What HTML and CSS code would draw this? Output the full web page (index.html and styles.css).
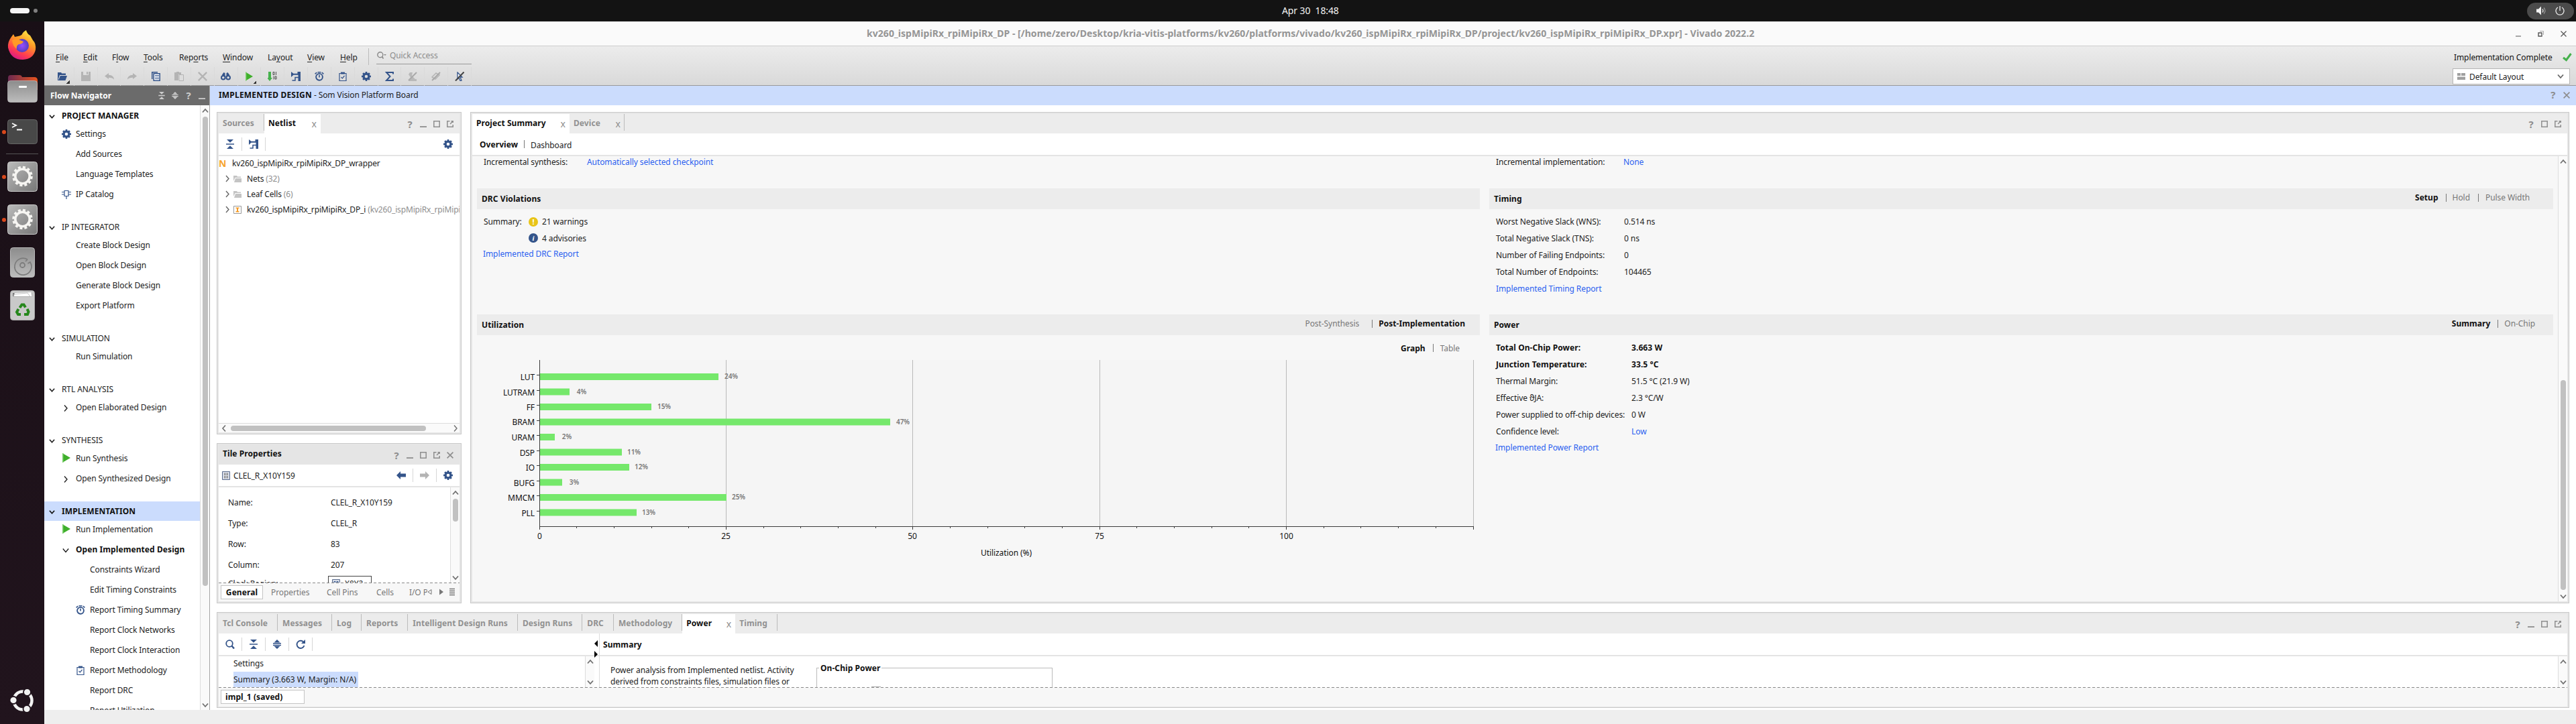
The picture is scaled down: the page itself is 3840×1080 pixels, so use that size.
FILE: index.html
```html
<!DOCTYPE html>
<html lang="en">
<head>
<meta charset="utf-8">
<title>Vivado 2022.2</title>
<link rel="stylesheet" href="styles.css">
</head>
<body>
<svg class="defs" aria-hidden="true">
  <symbol id="gear" viewBox="0 0 14 14"><path fill-rule="evenodd" fill="currentColor" d="M5.8 0h2.4l.3 1.8 1 .4L11 1.200l1.800 1.800-1 1.500.4 1 1.800.3v2.400l-1.800.3-.4 1 1 1.500-1.800 1.800-1.500-1-1 .4-.3 1.800H5.800l-.3-1.800-1-.4-1.500 1L1.200 11l1-1.500-.4-1L0 8.200V5.800l1.800-.3.4-1-1-1.500L3 1.200l1.500 1 1-.4zM7 4.700a2.300 2.300 0 1 0 0 4.600 2.300 2.300 0 0 0 0-4.600z"/></symbol>
  <symbol id="ip" viewBox="0 0 14 14"><path fill="none" stroke="currentColor" stroke-width="1.200" d="M4 1.500h6v8H4zM0 3.500h4M0 7h4M10 3.500h4M10 7h4M7 9.500V14"/></symbol>
  <symbol id="play" viewBox="0 0 12 14"><path fill="#3faf2b" d="M0 0l12 7-12 7z"/><path fill="#7fd070" d="M0 0h1.500v14H0z"/></symbol>
  <symbol id="clock" viewBox="0 0 14 14"><circle cx="7" cy="7.800" r="4.900" fill="none" stroke="currentColor" stroke-width="1.900"/><path stroke="currentColor" stroke-width="1.600" d="M7 4.800V8.600M4.500.8h5M.6 3.400l2.600-2.200M13.400 3.400l-2.600-2.200"/></symbol>
  <symbol id="clip" viewBox="0 0 12 14"><path fill="none" stroke="currentColor" stroke-width="1.200" d="M1 2.500h10v11H1zM3.500 8l1.800 1.800L8.500 6"/><path fill="currentColor" d="M3 .6h6v3H3z"/></symbol>
  <symbol id="collapse" viewBox="0 0 12 14"><path fill="currentColor" d="M1 0h10L6 4.800zM0 6.200h12v1.600H0zM1 14h10L6 9.200z"/></symbol>
  <symbol id="expand" viewBox="0 0 12 14"><path fill="currentColor" d="M6 0l4.500 4.500h-9zM0 5h12v1.500H0zM0 7.700h12v1.500H0zM6 14L1.500 9.700h9z"/></symbol>
  <symbol id="hier" viewBox="0 0 14 14"><path fill="currentColor" d="M0 0l3.500 2.800H9.500V0H14v14h-3.500V4.800H3.500L0 8z"/><path fill="none" stroke="currentColor" stroke-width="1.500" d="M11 8.500H6v4.500H1.500"/></symbol>
  <symbol id="down" viewBox="0 0 10 8"><path fill="none" stroke="currentColor" stroke-width="1.800" d="M1 1.500l4 4.500 4-4.500"/></symbol>
  <symbol id="down-thin" viewBox="0 0 10 8"><path fill="none" stroke="currentColor" stroke-width="1.200" d="M.8 1.500l4.200 5 4.200-5"/></symbol>
  <symbol id="up" viewBox="0 0 10 8"><path fill="none" stroke="currentColor" stroke-width="1.800" d="M1 6.500L5 2l4 4.500"/></symbol>
  <symbol id="right" viewBox="0 0 8 10"><path fill="none" stroke="currentColor" stroke-width="1.400" d="M2 .5L6 5 2 9.500"/></symbol>
  <symbol id="left" viewBox="0 0 8 10"><path fill="none" stroke="currentColor" stroke-width="1.600" d="M6 .5L2 5l4 4.500"/></symbol>
  <symbol id="min" viewBox="0 0 10 10"><path fill="currentColor" d="M0 8.200h10V10H0z"/></symbol>
  <symbol id="max" viewBox="0 0 10 10"><path fill="none" stroke="currentColor" stroke-width="1.500" d="M.8.8h8.400v8.400H.8z"/></symbol>
  <symbol id="float" viewBox="0 0 10 10"><path fill="none" stroke="currentColor" stroke-width="1.500" d="M4.500.8H.8v8.400h8.400V6M5 5l3.500-3.500M6.500 .8h2.700v2.200"/></symbol>
  <symbol id="close" viewBox="0 0 10 10"><path fill="none" stroke="currentColor" stroke-width="1.700" d="M.6.600l8.800 8.800M9.400.600L.6 9.400"/></symbol>
  <symbol id="folder" viewBox="0 0 12 10"><path fill="#c4c4c4" d="M0 0h5l1 1.500h5V3H2.500L0 8z"/><path fill="#c4c4c4" d="M3 4h9v6H1z"/></symbol>
  <symbol id="arrow" viewBox="0 0 14 12"><path fill="currentColor" d="M0 6l6-6v3.500h8v5H6V12z"/></symbol>
  <symbol id="undo" viewBox="0 0 14 10"><path fill="currentColor" d="M0 4.500L6 0v2.700c5 .3 8 2.500 8 7-1.800-2.200-4-3-8-3V9z"/></symbol>
</svg>

<header class="topbar">
  <span class="ws"></span><span class="ws-dot"></span>
  <span class="clock-text">Apr 30&nbsp; 18:48</span>
  <span class="tray">
    <svg width="15" height="14" viewBox="0 0 15 14"><path fill="#f4f4f4" d="M0 4.500h3L7 .5v13l-4-4H0z"/><path fill="none" stroke="#f4f4f4" stroke-width="1.200" d="M9 4.500q2 2.500 0 5"/><path fill="none" stroke="#999" stroke-width="1.200" d="M11 2.500q4 4.500 0 9"/></svg>
    <svg width="14" height="14" viewBox="0 0 14 14"><path fill="none" stroke="#eee" stroke-width="1.300" d="M4 2a6 6 0 1 0 6 0M7 0v7"/></svg>
  </span>
</header>

<div class="screen">
  <aside class="dock">
    <div class="app firefox"><svg width="44" height="46" viewBox="0 0 44 46"><defs><linearGradient id="ff" x1=".8" y1="0" x2=".3" y2="1"><stop offset="0" stop-color="#fff04a"/><stop offset=".4" stop-color="#ff9a26"/><stop offset=".75" stop-color="#ff3d50"/><stop offset="1" stop-color="#d8178a"/></linearGradient><radialGradient id="fp"><stop offset="0" stop-color="#9a4dff"/><stop offset="1" stop-color="#5340c0"/></radialGradient></defs><path fill="url(#ff)" d="M6 11l3-4 2 4 5-1q5-1 6-3Q23 4 28 1q1 5 6 8l4 7q5 5 4 14-3 14-19 15Q5 45 1 27q-1-8 5-16z"/><circle cx="22" cy="24" r="10" fill="url(#fp)"/><path fill="#ff9a26" d="M7 16q6-4 12 0l5 2q-2 4-7 4-4 2-3 7-6-4-7-13z"/></svg></div>
    <div class="app files"><svg width="45" height="41" viewBox="0 0 45 41"><defs><linearGradient id="fo"><stop offset="0" stop-color="#6b2950"/><stop offset="1" stop-color="#e8541f"/></linearGradient><linearGradient id="gr" x2="0" y2="1"><stop offset="0" stop-color="#8c8c8c"/><stop offset="1" stop-color="#bdbdbd"/></linearGradient><linearGradient id="gd" x2="1" y2="1"><stop offset="0" stop-color="#bbb"/><stop offset="1" stop-color="#777"/></linearGradient></defs><path fill="url(#fo)" d="M1 4q0-4 4-4h13q3 0 4 3h18q5 0 5 5v14H1z"/><rect x=".5" y="8.500" width="44" height="32" rx="4" fill="url(#gr)" stroke="#ccc" stroke-opacity=".6"/><rect x="17" y="16" width="12" height="3" rx="1" fill="#fff"/></svg></div>
    <div class="app term run"><svg width="45" height="37" viewBox="0 0 45 37"><rect x=".5" y=".5" width="44" height="36" rx="4" fill="#484848" stroke="#666"/><path fill="none" stroke="#fff" stroke-width="1.800" d="M7 6l6 3-6 3M14 15.500h8"/></svg></div>
    <hr class="dock-sep">
    <div class="app gear1 run"><svg width="45" height="45" viewBox="0 0 45 45"><rect x=".5" y=".5" width="44" height="44" rx="4" fill="url(#gd)" stroke="#ccc"/><circle cx="22.500" cy="22" r="13.500" fill="none" stroke="#f6f5f2" stroke-width="3.500" stroke-dasharray="4 3.068"/><circle cx="22.500" cy="22" r="10.700" fill="none" stroke="#f6f5f2" stroke-width="3.600"/></svg></div>
    <div class="app gear2 run"><svg width="45" height="45" viewBox="0 0 45 45"><rect x=".5" y=".5" width="44" height="44" rx="4" fill="url(#gd)" stroke="#ccc"/><circle cx="22.500" cy="22" r="13.500" fill="none" stroke="#f6f5f2" stroke-width="3.500" stroke-dasharray="4 3.068"/><circle cx="22.500" cy="22" r="10.700" fill="none" stroke="#f6f5f2" stroke-width="3.600"/></svg></div>
    <div class="app disk"><svg width="37" height="45" viewBox="0 0 37 45"><rect x=".5" y=".5" width="36" height="44" rx="4" fill="url(#gr)" stroke="#bbb"/><path fill="none" stroke="#7c7c7c" stroke-width="1.700" d="M26 18A12.500 12.500 0 1 0 30 22l-3.500 2M26 18l-3 3"/><circle cx="18.500" cy="26.500" r="3.500" fill="none" stroke="#7c7c7c" stroke-width="1.800"/></svg></div>
    <div class="app trash"><svg width="37" height="45" viewBox="0 0 37 45"><rect x=".5" y=".5" width="36" height="44" rx="4" fill="#c9c9c9" stroke="#aaa"/><path fill="#777" d="M4 4h29v5H4z"/><path fill="#fff" stroke="#aaa" stroke-width=".7" d="M7 3.500l25-1 1 7H5zM6 6l20-2 4 5.500H5.500z"/><g fill="none" stroke="#26871c" stroke-width="4"><path d="M14.500 26l3-4.500h3l2.500 4M25.500 28l2 4-1.500 4h-5M16 36h-4l-2-3.500 2.500-4.500"/></g></svg></div>
    <div class="ubuntu"><svg width="36" height="36" viewBox="0 0 36 36"><circle cx="19" cy="18" r="13.500" fill="none" stroke="#f2f2f2" stroke-width="4.500"/><g fill="#f2f2f2" stroke="#21141d" stroke-width="1.800"><circle cx="5" cy="17.500" r="5.500"/><circle cx="25.500" cy="5.500" r="5.500"/><circle cx="25" cy="30.500" r="5.500"/></g></svg></div>
  </aside>

  <div class="window">
    <div class="titlebar"><span class="title">kv260_ispMipiRx_rpiMipiRx_DP - [/home/zero/Desktop/kria-vitis-platforms/kv260/platforms/vivado/kv260_ispMipiRx_rpiMipiRx_DP/project/kv260_ispMipiRx_rpiMipiRx_DP.xpr] - Vivado 2022.2</span>
      <span class="wm"><svg width="8" height="9"><path d="M0 8h8" stroke="#555"/></svg><svg width="9" height="9"><path fill="none" stroke="#555" stroke-width="1.400" d="M1 3h5v5H1z"/><path fill="none" stroke="#aaa" d="M3 .5h5.500V6"/></svg><svg width="9" height="9"><path stroke="#555" stroke-width="1.200" d="M.5.5l8 8M8.500.5l-8 8"/></svg></span></div>
    <div class="menus">
      <div class="menu-left">
        <nav class="menubar"><span><u>F</u>ile</span><span><u>E</u>dit</span><span>F<u>l</u>ow</span><span><u>T</u>ools</span><span>Rep<u>o</u>rts</span><span><u>W</u>indow</span><span>La<u>y</u>out</span><span><u>V</u>iew</span><span><u>H</u>elp</span>
          <div class="quick"><svg width="14" height="12" viewBox="0 0 14 12"><circle cx="4.800" cy="4.800" r="4" fill="none" stroke="#888" stroke-width="1.400"/><path stroke="#888" stroke-width="1.600" d="M7.500 7.500L9.500 10.500"/><path fill="#888" d="M10 4h4l-2 2z"/></svg>Quick Access</div></nav>
        <div class="toolbar">
          <i><svg width="14" height="12" viewBox="0 0 14 12"><path fill="#34548a" d="M0 0h5l1.200 1.500H12V4H3L1 9.500V12H0z"/><path fill="#34548a" d="M3.800 5H14l-2.500 7H1z"/></svg><b class="drop"></b></i>
          <i><svg width="14" height="14" viewBox="0 0 14 14"><path fill="#b4b4b4" d="M0 0h3v5h8V0h3v14H0zM8 0h2v4H8z"/></svg></i>
          <i class="dim"><svg width="14" height="10"><use href="#undo"/></svg></i>
          <i class="dim flip"><svg width="14" height="10"><use href="#undo"/></svg></i>
          <i><svg width="13" height="14" viewBox="0 0 13 14"><path fill="#34548a" d="M0 0h9v1.500H1.500V11H0z"/><path fill="#fff" stroke="#34548a" stroke-width="1.500" d="M3.200 2.700h9v10.500h-9z"/><path stroke="#34548a" d="M5 5.500h6M5 8h6M5 10.500h6"/></svg></i>
          <i><svg width="14" height="14" viewBox="0 0 14 14"><path fill="#b4b4b4" d="M0 1h3V0h4v1h3v3H6v9H0z"/><path fill="#ddd" stroke="#b4b4b4" d="M7 4.500h6.500v9H7z"/></svg></i>
          <i class="dim"><svg width="14" height="14"><use href="#close"/></svg></i>
          <i><svg width="15" height="12" viewBox="0 0 15 12"><g fill="none" stroke="#34548a" stroke-width="2"><circle cx="3.800" cy="7.800" r="2.800"/><circle cx="11.200" cy="7.800" r="2.800"/></g><path fill="#34548a" d="M2 3.500L4.500 0l2 1v4h2V1l2-1L13 3.500l-1 2H3z"/></svg></i>
          <i><svg width="11" height="14"><use href="#play"/></svg><b class="drop"></b></i>
          <i><svg width="14" height="14" viewBox="0 0 14 14"><path fill="#45b14c" d="M1 0h4v9h2l-4 5-4-5h2z"/><path fill="none" stroke="#555" stroke-width="1" d="M8 .5h2v4H8zM12.500 0v5M9 6.500v5M11 7h2v4h-2z"/></svg></i>
          <i><svg width="14" height="14"><use href="#hier"/></svg></i>
          <i><svg width="14" height="14"><use href="#clock"/></svg></i>
          <i><svg width="12" height="14"><use href="#clip"/></svg></i>
          <i><svg width="14" height="14"><use href="#gear"/></svg></i>
          <i><svg width="13" height="14" viewBox="0 0 13 14"><path fill="none" stroke="#34548a" stroke-width="2" d="M12 3.500V1H2l5.500 6L2 13h10v-2.500"/></svg></i>
          <i><svg width="14" height="14" viewBox="0 0 14 14"><path fill="#b9b9b9" d="M3 1h4l-1 5 5 5h2v3H1l4-4-4-6z"/><path stroke="#a9a9a9" stroke-width="2" d="M1 13L13 1"/></svg></i>
          <i><svg width="14" height="14" viewBox="0 0 14 14"><path fill="none" stroke="#b4b4b4" stroke-width="1.500" d="M1 8l6-6 5 3-6 6zM3 12l8-9"/><path stroke="#a9a9a9" stroke-width="1.800" d="M1 13L13 1"/></svg></i>
          <i><svg width="14" height="14" viewBox="0 0 14 14"><path fill="#fff" stroke="#34548a" stroke-width="1.300" d="M4 1l7 7H8l2 5-2 .5L6.500 9 4 11z"/><path stroke="#444" stroke-width="2" d="M1 13.500L13.500.5"/></svg></i>
        </div>
      </div>
      <div class="menu-right">
        <div class="status">Implementation Complete<svg width="14" height="13" viewBox="0 0 14 13"><path fill="none" stroke="#45b14c" stroke-width="3" d="M1 7l4.500 3.500L12.500 1"/></svg></div>
        <div class="layout-box"><svg width="12" height="10" viewBox="0 0 12 10"><path fill="#a0a0a0" d="M0 0h5v4H0zM6 0h6v4H6zM0 5.500h12V10H0z"/></svg><span>Default Layout</span><svg width="10" height="8"><use href="#down"/></svg></div>
      </div>
    </div>

    <div class="work">
      <section class="flow">
        <div class="flow-head"><span>Flow Navigator</span><svg width="10" height="11"><use href="#collapse"/></svg><svg width="10" height="11"><use href="#expand"/></svg><b>?</b><svg width="10" height="10"><use href="#min"/></svg></div>
        <div class="flow-body">
          <div class="tree">
            <h3 class="bold"><svg><use href="#down"/></svg>PROJECT MANAGER</h3>
            <p><svg class="navy"><use href="#gear"/></svg>Settings</p><p>Add Sources</p><p>Language Templates</p><p><svg class="navy"><use href="#ip"/></svg>IP Catalog</p>
            <h3><svg><use href="#down"/></svg>IP INTEGRATOR</h3>
            <p>Create Block Design</p><p>Open Block Design</p><p>Generate Block Design</p><p>Export Platform</p>
            <h3><svg><use href="#down"/></svg>SIMULATION</h3>
            <p>Run Simulation</p>
            <h3><svg><use href="#down"/></svg>RTL ANALYSIS</h3>
            <p><svg class="chev"><use href="#right"/></svg>Open Elaborated Design</p>
            <h3><svg><use href="#down"/></svg>SYNTHESIS</h3>
            <p><svg class="play"><use href="#play"/></svg>Run Synthesis</p><p><svg class="chev"><use href="#right"/></svg>Open Synthesized Design</p>
            <h3 class="bold sel"><svg><use href="#down"/></svg>IMPLEMENTATION</h3>
            <p><svg class="play"><use href="#play"/></svg>Run Implementation</p><p class="bold"><svg class="chev thin"><use href="#down-thin"/></svg>Open Implemented Design</p>
            <p class="sub">Constraints Wizard</p><p class="sub">Edit Timing Constraints</p><p class="sub"><svg class="navy"><use href="#clock"/></svg>Report Timing Summary</p><p class="sub">Report Clock Networks</p><p class="sub">Report Clock Interaction</p><p class="sub"><svg class="navy"><use href="#clip"/></svg>Report Methodology</p><p class="sub">Report DRC</p><p class="sub">Report Utilization</p>
          </div>
          <div class="vbar"><svg class="ar"><use href="#up"/></svg><span class="thumb flow-thumb"></span><svg class="ar end"><use href="#down"/></svg></div>
        </div>
      </section>

      <main class="design">
        <div class="design-head"><b>IMPLEMENTED DESIGN</b>&nbsp;- Som Vision Platform Board<span class="btns"><b>?</b><svg><use href="#close"/></svg></span></div>
        <div class="panes">
          <div class="row-top">
            <div class="col-left">
              <section class="panel netlist">
                <div class="tabs"><span class="tab first">Sources</span><span class="tab on nl">Netlist<em>x</em></span><span class="btns"><b>?</b><svg><use href="#min"/></svg><svg><use href="#max"/></svg><svg><use href="#float"/></svg></span></div>
                <div class="tools"><i><svg width="12" height="14"><use href="#collapse"/></svg></i><i><svg width="14" height="14"><use href="#hier"/></svg></i><svg class="cfg" width="14" height="14"><use href="#gear"/></svg></div>
                <div class="net-tree">
                  <p class="root"><b>N</b>kv260_ispMipiRx_rpiMipiRx_DP_wrapper</p>
                  <p><svg class="chev"><use href="#right"/></svg><svg class="fold"><use href="#folder"/></svg>Nets&nbsp;<s>(32)</s></p>
                  <p><svg class="chev"><use href="#right"/></svg><svg class="fold"><use href="#folder"/></svg>Leaf Cells&nbsp;<s>(6)</s></p>
                  <p><svg class="chev"><use href="#right"/></svg><svg class="inst" viewBox="0 0 12 12"><path fill="#fff" stroke="#999" d="M.5.5h11v11H.5z"/><path fill="#f59a23" d="M3.500 2.500h5v1.500H7v4h1.500v1.500h-5V8H5V4H3.500z"/></svg>kv260_ispMipiRx_rpiMipiRx_DP_i&nbsp;<s>(kv260_ispMipiRx_rpiMipiRx_DP)</s></p>
                </div>
                <div class="hbar"><svg class="ar"><use href="#left"/></svg><span></span><svg class="ar"><use href="#right"/></svg></div>
              </section>
              <section class="panel tile">
                <div class="tabs grey"><span class="cap">Tile Properties</span><span class="btns"><b>?</b><svg><use href="#min"/></svg><svg><use href="#max"/></svg><svg><use href="#float"/></svg><svg><use href="#close"/></svg></span></div>
                <div class="tools tile-tools"><svg width="12" height="13" viewBox="0 0 12 13"><path fill="#d8dde8" stroke="#5a6b8c" d="M.5.500h11v12H.5z"/><path fill="#999" d="M3 2.500h2.500V6H3zM6.500 2.500H9V6H6.500zM3 7h2.500v3.500H3zM6.500 7H9v3.500H6.500z"/></svg><span>CLEL_R_X10Y159</span><svg class="nv" width="14" height="12"><use href="#arrow"/></svg><i class="bar"></i><svg class="fw" width="14" height="12"><use href="#arrow"/></svg><i class="bar"></i><svg class="nv" width="14" height="14"><use href="#gear"/></svg></div>
                <div class="tile-body">
                  <dl><dt>Name:</dt><dd>CLEL_R_X10Y159</dd><dt>Type:</dt><dd>CLEL_R</dd><dt>Row:</dt><dd>83</dd><dt>Column:</dt><dd>207</dd><dt>Clock Region:</dt><dd><span class="region"><svg width="12" height="12" viewBox="0 0 12 12"><path fill="#d8dde8" stroke="#5a6b8c" d="M.5.500h11v11H.5z"/><path fill="none" stroke="#34548a" d="M3 3.500h2v4H3zM7 3.500h2v4H7z"/></svg>X0Y2</span></dd></dl>
                  <div class="vbar"><svg class="ar"><use href="#up"/></svg><span class="thumb tile-thumb"></span><svg class="ar end"><use href="#down"/></svg></div>
                </div>
                <div class="subtabs"><b>General</b><span>Properties</span><span>Cell Pins</span><span>Cells</span><span class="cut">I/O Ports</span><svg width="48" height="12" viewBox="0 0 48 12"><path fill="none" stroke="#777" d="M6 2.500v7L1 6z"/><path fill="#777" d="M18 1.500v9L24 6z"/><path stroke="#777" stroke-width="1.300" d="M33 1.500h8M33 4.500h8M33 7.500h8M33 10.500h8"/></svg></div>
              </section>
            </div>

            <section class="panel project">
              <div class="tabs"><span class="tab on ps">Project Summary<em>x</em></span><span class="tab dev">Device<em>x</em></span><span class="btns"><b>?</b><svg><use href="#max"/></svg><svg><use href="#float"/></svg></span></div>
              <div class="tools views"><b>Overview</b><span>Dashboard</span></div>
              <div class="proj-body">
                <div class="half left-half">
                  <div class="incr"><span>Incremental synthesis:</span><a>Automatically selected checkpoint</a></div>
                  <article class="card drc"><h4>DRC Violations</h4>
                    <div class="ln"><span class="k">Summary:</span><span class="dot warn">!</span>21 warnings</div>
                    <div class="ln l2"><span class="k"></span><span class="dot info">i</span>4 advisories</div>
                    <a class="ln l3">Implemented DRC Report</a></article>
                  <article class="card util"><h4>Utilization<span class="sw"><span>Post-Synthesis</span><b>Post-Implementation</b></span></h4>
                    <div class="gt"><b>Graph</b><span>Table</span></div>
                    <svg class="chart" width="1495" height="310" viewBox="711 530 1495 310">
                      <path fill="#f5f5f5" d="M805 537h1392v248H805z"/>
                      <path stroke="#b9b9b9" d="M1082.500 537v248M1360.500 537v248M1639.500 537v248M1917.500 537v248M2196.500 537v248"/>
                      <g fill="#75e86b"><path d="M805 557h266v10H805zM805 579.500h44v10h-44zM805 602h166v10H805zM805 624.500h522v10H805zM805 647h22v10h-22zM805 669.500h122v10H805zM805 692h133v10H805zM805 714.500h33v10h-33zM805 737h278v10H805zM805 759.500h144v10H805z"/></g>
                      <path stroke="#3a3a3a" fill="none" d="M804.500 537v253M804 785.500h1393M800 559.500h4M800 582.500h4M800 604.500h4M800 627.500h4M800 649.500h4M800 672.500h4M800 694.500h4M800 717.500h4M800 739.500h4M800 762.500h4M859.500 785v3M915.500 785v3M971.500 785v3M1026.500 785v3M1082.500 785v5M1138.500 785v3M1193.500 785v3M1249.500 785v3M1305.500 785v3M1360.500 785v5M1416.500 785v3M1472.500 785v3M1527.500 785v3M1583.500 785v3M1639.500 785v5M1694.500 785v3M1750.500 785v3M1806.500 785v3M1861.500 785v3M1917.500 785v5M1973.500 785v3M2028.500 785v3M2084.500 785v3M2140.500 785v3M2196.500 785v5"/>
                      <g class="cat"><text x="797" y="567">LUT</text><text x="797" y="590">LUTRAM</text><text x="797" y="612">FF</text><text x="797" y="634">BRAM</text><text x="797" y="657">URAM</text><text x="797" y="680">DSP</text><text x="797" y="702">IO</text><text x="797" y="725">BUFG</text><text x="797" y="747">MMCM</text><text x="797" y="770">PLL</text></g>
                      <g class="val"><text x="1090" y="565">24%</text><text x="867" y="588">4%</text><text x="990" y="610">15%</text><text x="1346" y="633">47%</text><text x="845" y="655">2%</text><text x="945" y="678">11%</text><text x="956" y="700">12%</text><text x="856" y="723">3%</text><text x="1101" y="745">25%</text><text x="967" y="768">13%</text></g>
                      <g class="num"><text x="804.500" y="804">0</text><text x="1082" y="804">25</text><text x="1360" y="804">50</text><text x="1639" y="804">75</text><text x="1917.500" y="804">100</text><text x="1500" y="829">Utilization (%)</text></g>
                    </svg></article>
                </div>
                <div class="half right-half">
                  <div class="incr r"><span>Incremental implementation:</span><a>None</a></div>
                  <article class="card tim"><h4>Timing<span class="sw t"><b>Setup</b><span>Hold</span><span>Pulse Width</span></span></h4>
                    <dl><dt>Worst Negative Slack (WNS):</dt><dd>0.514 ns</dd><dt>Total Negative Slack (TNS):</dt><dd>0 ns</dd><dt>Number of Failing Endpoints:</dt><dd>0</dd><dt>Total Number of Endpoints:</dt><dd>104465</dd></dl><a>Implemented Timing Report</a></article>
                  <article class="card pow"><h4>Power<span class="sw p"><b>Summary</b><span>On-Chip</span></span></h4>
                    <dl><dt><b>Total On-Chip Power:</b></dt><dd><b>3.663 W</b></dd><dt><b>Junction Temperature:</b></dt><dd><b>33.5 °C</b></dd><dt>Thermal Margin:</dt><dd>51.5 °C (21.9 W)</dd><dt>Effective ϑJA:</dt><dd>2.3 °C/W</dd><dt>Power supplied to off-chip devices:</dt><dd>0 W</dd><dt>Confidence level:</dt><dd><a>Low</a></dd></dl><a class="rep">Implemented Power Report</a></article>
                </div>
                <div class="vbar"><svg class="ar"><use href="#up"/></svg><span class="thumb proj-thumb"></span><svg class="ar end"><use href="#down"/></svg></div>
              </div>
            </section>
          </div>

          <section class="panel bottom">
            <div class="tabs"><span class="tab first">Tcl Console</span><span class="tab">Messages</span><span class="tab">Log</span><span class="tab">Reports</span><span class="tab">Intelligent Design Runs</span><span class="tab">Design Runs</span><span class="tab">DRC</span><span class="tab">Methodology</span><span class="tab on pw">Power<em>x</em></span><span class="tab tm">Timing</span><span class="btns"><b>?</b><svg><use href="#min"/></svg><svg><use href="#max"/></svg><svg><use href="#float"/></svg></span></div>
            <div class="split">
              <div class="split-l">
                <div class="tools"><i><svg width="14" height="14" viewBox="0 0 14 14"><circle cx="6" cy="6" r="4.800" fill="none" stroke="#34548a" stroke-width="1.800"/><path stroke="#34548a" stroke-width="2.400" d="M9.500 9.500l3.500 4"/></svg></i><i><svg width="12" height="14"><use href="#collapse"/></svg></i><i><svg width="12" height="14"><use href="#expand"/></svg></i><i><svg width="14" height="14" viewBox="0 0 14 14"><path fill="none" stroke="#34548a" stroke-width="1.900" d="M12 4.500A5.600 5.600 0 1 0 12.500 9"/><path fill="#34548a" d="M14 0v6H8z"/></svg></i></div>
                <div class="pl"><div class="list"><p>Settings</p><p><mark>Summary (3.663 W, Margin: N/A)</mark></p></div><div class="vbar"><svg class="ar"><use href="#up"/></svg><svg class="ar end"><use href="#down"/></svg></div></div>
              </div>
              <div class="grip"><svg width="6" height="27" viewBox="0 0 6 27"><path d="M5 0v10L0 5zM0 16v10l5-5z"/></svg></div>
              <div class="split-r">
                <div class="tools sum"><b>Summary</b></div>
                <div class="pr"><p>Power analysis from Implemented netlist. Activity<br>derived from constraints files, simulation files or</p><fieldset><legend>On-Chip Power</legend><span class="nub"></span></fieldset><div class="vbar"><svg class="ar"><use href="#up"/></svg><svg class="ar end"><use href="#down"/></svg></div></div>
              </div>
            </div>
            <div class="runs"><b>impl_1 (saved)</b></div>
          </section>
        </div>
      </main>
    </div>
    <footer class="foot"></footer>
  </div>
</div>
</body>
</html>
```
FILE: styles.css
```css
* { box-sizing: border-box; }
html, body { margin: 0; width: 3840px; height: 1080px; overflow: hidden; }
body { font: 12px/17px "Noto Sans", "Open Sans", sans-serif; color: #222; letter-spacing: -0.09px; background: #fff; display: flex; flex-direction: column; white-space: nowrap; }
b, .bold, h4, legend { font-weight: 700; letter-spacing: 0.08px; color: #111; }
p, h3, h4, dl, dd, dt { margin: 0; }
svg { flex: none; display: block; }
i { font-style: normal; }
a { color: #2b5ff0; }
.defs { position: absolute; width: 0; height: 0; }
.navy, .tools, .nv { color: #34548a; }

.topbar { height: 32px; flex: none; background: #131313; display: flex; align-items: center; padding-left: 15px; color: #f2f2f2; }
.ws { width: 29px; height: 8px; border-radius: 4px; background: #f4f4f4; }
.ws-dot { width: 6px; height: 6px; border-radius: 3px; background: #808080; margin-left: 6px; }
.clock-text { margin-left: 1855px; width: 90px; font-size: 14px; letter-spacing: -0.1px; margin-top: -2px; }
.tray { margin-left: auto; margin-right: 3px; width: 70px; height: 25px; border-radius: 13px; background: #4b4b4b; display: flex; align-items: center; padding-left: 14px; gap: 13px; }

.screen { flex: 1; display: flex; min-height: 0; }
.dock { width: 66px; flex: none; background: linear-gradient(#190f16, #21141d); display: flex; flex-direction: column; align-items: center; padding-top: 12px; }
.app { width: 66px; display: flex; justify-content: center; align-items: center; position: relative; }
.run::before { content: ""; position: absolute; left: 3px; top: calc(50% - 3px); width: 6px; height: 6px; border-radius: 3px; background: #d9481c; }
.firefox { height: 46px; }
.files { height: 41px; margin-top: 22px; }
.term { height: 37px; margin-top: 25px; }
.dock-sep { width: 48px; height: 1px; border: 0; background: #555; margin: 14px 0 11px; }
.gear1 { height: 45px; }
.gear2, .disk, .trash { height: 45px; margin-top: 19px; }
.ubuntu { margin-top: auto; margin-bottom: 17px; }

.window { flex: 1; min-width: 0; display: flex; flex-direction: column; }
.titlebar { height: 36px; flex: none; background: #fafafa; display: flex; align-items: center; padding: 0 14px 0 1226px; }
.title { font: 700 14px/20px "Noto Sans", sans-serif; color: #959595; letter-spacing: 0.055px; margin-top: -1px; }
.wm { margin-left: auto; display: flex; gap: 25px; align-items: center; }
.menus { height: 60px; flex: none; border-top: 1px solid #ccc; border-bottom: 1px solid #999; background: linear-gradient(#ececec, #d9d9d9); display: flex; justify-content: space-between; }
.menubar { height: 31px; display: flex; align-items: center; padding-left: 17px; }
.menubar > span { height: 17px; margin-top: 2px; }
.menubar > span:nth-child(1) { width: 41px; }
.menubar > span:nth-child(2) { width: 43px; }
.menubar > span:nth-child(3) { width: 47px; }
.menubar > span:nth-child(4) { width: 53px; }
.menubar > span:nth-child(5) { width: 65px; }
.menubar > span:nth-child(6) { width: 67px; }
.menubar > span:nth-child(7) { width: 59px; }
.menubar > span:nth-child(8) { width: 49px; }
.menubar > span:nth-child(9) { width: 42px; }
.menubar u { text-underline-offset: 2px; }
.quick { border-left: 1px solid #bbb; width: 154px; height: 25px; margin-top: 0; display: flex; align-items: center; gap: 5px; padding: 0 0 4px 12px; color: #8c8c8c; background: linear-gradient(#999, #999) 11px 23px / 142px 1px no-repeat; }
.toolbar { display: flex; height: 28px; padding-left: 10px; }
.toolbar > i { width: 34.830px; height: 28px; display: flex; align-items: center; justify-content: center; position: relative; color: #34548a; border-right: 1px solid #dadada; }
.toolbar > .dim { color: #b4b4b4; }
.flip svg { transform: scaleX(-1); }
.drop { position: absolute; right: 6px; bottom: 3px; width: 5px; height: 5px; background: linear-gradient(135deg, transparent 50%, #333 50%); }
.menu-right { width: 175px; margin-right: 9px; }
.status { display: flex; height: 33px; align-items: center; padding-left: 2px; color: #111; gap: 15px; }
.layout-box { height: 24px; border: 1px solid #b5b5b5; background: #fff; display: flex; align-items: center; padding: 0 8px 0 6px; color: #666; }
.layout-box span { margin-left: 6px; flex: 1; color: #222; }

.work { flex: 1; display: flex; min-height: 0; }
.flow { width: 247px; flex: none; border-right: 1px solid #a5a5a5; display: flex; flex-direction: column; }
.flow-head { height: 29px; flex: none; background: #6b6b6b; color: #ccc; display: flex; align-items: center; padding: 0 6px 0 9px; gap: 10px; }
.flow-head span { color: #fff; font-weight: 700; margin-right: auto; letter-spacing: 0; }
.flow-head b { color: #ccc; font-size: 15px; width: 10px; text-align: center; }
.flow-body { flex: 1; display: flex; min-height: 0; }
.tree { flex: 1; overflow: hidden; height: 902px; padding-top: 1px; }
.tree h3 { font-weight: 400; font-size: 12px; height: 29px; line-height: 29px; margin-top: 19px; display: flex; align-items: center; color: #222; }
.tree h3:first-child { margin-top: 0; }
.tree h3.bold { font-weight: 700; color: #111; }
.tree h3 + p { margin-top: -2px; }
.tree h3 svg { width: 9px; height: 8px; margin: 2px 10px 0 7px; }
.tree .sel { background: #cbdcfd; }
.tree p { height: 30px; line-height: 30px; padding-left: 47px; position: relative; }
.tree p.sub { padding-left: 68px; }
.tree p svg { position: absolute; left: 26px; top: 8px; width: 14px; height: 14px; }
.tree p.sub svg { left: 47px; }
.tree p svg.chev { width: 8px; height: 10px; left: 28px; top: 11px; }
.tree p svg.thin { width: 10px; height: 8px; left: 27px; top: 12px; }
.tree p svg.play { width: 12px; height: 14px; left: 27px; top: 7px; }

.vbar { width: 14px; flex: none; background: #fafafa; border-left: 1px solid #ddd; position: relative; display: flex; flex-direction: column; align-items: center; color: #707070; }
.vbar .ar { width: 10px; height: 8px; margin-top: 4px; }
.vbar .end { margin-top: auto; margin-bottom: 3px; }
.thumb { width: 8px; border-radius: 4px; background: #c1c1c1; }
.flow-thumb { height: 700px; margin-top: 5px; }
.tile-thumb { height: 34px; margin-top: 5px; }
.proj-thumb { height: 313px; margin-top: 322px; }

.design { flex: 1; min-width: 0; display: flex; flex-direction: column; }
.design-head { height: 29px; flex: none; background: #cbdcfd; display: flex; align-items: center; padding: 0 9px 2px 13px; }
.design-head b { letter-spacing: 0.19px; }
.btns { margin-left: auto; display: flex; align-items: center; gap: 10px; color: #8e8e8e; }
.btns svg { width: 10px; height: 10px; }
.btns b { color: #8e8e8e; font-size: 15px; width: 10px; text-align: center; }
.panes { flex: 1; padding: 10px 10px 3px; display: flex; flex-direction: column; gap: 13px; min-height: 0; }
.row-top { height: 733px; display: flex; gap: 13px; }
.col-left { width: 365px; display: flex; flex-direction: column; gap: 13px; }
.panel { border: 1px solid #c9c9c9; box-shadow: inset 0 0 0 2px #e6e6e6; padding: 2px; display: flex; flex-direction: column; background: #fff; min-width: 0; }
.netlist { height: 481px; }
.tile { height: 239px; }
.project { flex: 1; }
.bottom { height: 143px; }
.tabs { height: 29px; flex: none; background: #ececec; display: flex; align-items: stretch; }
.tabs.grey { background: #e5e5e5; }
.tabs .btns { padding: 1px 9px 0 0; }
.tab { color: #919191; font-weight: 700; letter-spacing: 0.07px; padding: 0 15px 0 7px; line-height: 27px; background: linear-gradient(#bbb, #bbb) right 0 top 0 / 1px 25px no-repeat; }
.tab.first { padding-left: 6px; }
.tab.on { background: #fff; color: #111; display: flex; justify-content: space-between; padding-left: 6px; }
.tab em { font: 400 14px/30px "Noto Sans", sans-serif; color: #8e8e8e; }
.tab.nl { width: 84px; padding-right: 6px; }
.netlist .first { width: 68px; }
.tab.ps { width: 145px; padding-right: 6px; }
.tab.dev { width: 82px; padding: 0 6px; display: flex; justify-content: space-between; }
.tab.pw { width: 79px; padding-right: 6px; }
.tab.tm { padding-left: 6px; }
.cap { font-weight: 700; color: #111; padding-left: 6px; line-height: 26px; letter-spacing: 0.08px; }
.tools { height: 34px; flex: none; border-bottom: 2px solid #e4e4e4; display: flex; align-items: center; background: #fff; }
.tools i { width: 35px; height: 20px; display: flex; align-items: center; justify-content: center; border-right: 1px solid #d6d6d6; }
.cfg { margin-left: auto; margin-right: 10px; }
.net-tree { flex: 1; overflow: hidden; color: #222; letter-spacing: -0.15px; }
.net-tree p { height: 23px; display: flex; align-items: center; padding-left: 9px; }
.net-tree .root { padding: 0 0 2px; height: 22px; }
.net-tree .root b { color: #f7a531; font-size: 14px; width: 20px; }
.net-tree s { text-decoration: none; color: #8e8e8e; }
.net-tree .chev { width: 8px; height: 11px; color: #666; margin-right: 5px; }
.net-tree .fold { width: 12px; height: 10px; margin-right: 8px; }
.net-tree .inst { width: 12px; height: 12px; margin-right: 8px; }
.hbar { height: 14px; flex: none; border-top: 1px solid #ddd; background: #fafafa; display: flex; align-items: center; justify-content: space-between; padding: 0 2px 0 4px; color: #707070; }
.hbar span { width: 291px; height: 8px; border-radius: 4px; background: #c1c1c1; margin-right: 35px; }
.hbar .ar { width: 8px; height: 10px; }
.tile-tools { padding: 0 10px 0 5px; }
.tile-tools span { margin-left: 5px; margin-right: auto; color: #222; }
.tile-tools .bar { width: 1px; margin: 0 10px; background: #d6d6d6; border: 0; }
.fw { transform: scaleX(-1); color: #b4b4b4; }
.tile-body { height: 142px; display: flex; overflow: hidden; }
.tile-body dl { flex: 1; height: 142px; overflow: hidden; display: grid; grid-template-columns: 153px 1fr; grid-auto-rows: 31px; align-items: center; padding: 7px 0 0 14px; align-content: start; }
.tile-body dl > :nth-last-child(-n+2) { margin-top: -7px; }
.region { display: flex; align-items: center; gap: 7px; width: 65px; height: 22px; border: 1px solid #444; margin-left: -4px; padding-left: 5px; background: #fff; }
.subtabs { height: 28px; flex: none; background: #f7f7f7; display: flex; align-items: center; position: relative; padding-left: 3px; color: #777; }
.subtabs::before, .runs::before { content: ""; position: absolute; left: 0; right: 0; top: 0; height: 1px; background: repeating-linear-gradient(90deg, #888 0 4px, transparent 4px 7px); }
.subtabs b, .runs b { border: 1px solid #c4c4c4; background: #fff; height: 21px; line-height: 19px; }
.subtabs b { width: 63px; text-align: center; margin-right: 12px; }
.subtabs span { width: 83px; }
.subtabs span:nth-of-type(2) { width: 74px; }
.subtabs span:nth-of-type(3) { width: 49px; }
.subtabs span.cut { width: 27px; overflow: hidden; }

.views { padding-left: 11px; color: #222; }
.views b { width: 67px; border-right: 0; background: linear-gradient(#777, #777) right 0 center / 1px 12px no-repeat; }
.views span { margin: 3px 0 0 9px; }
.proj-body { flex: 1; min-height: 0; display: flex; background: #f7f7f7; }
.half { display: flex; flex-direction: column; }
.left-half { width: 1495px; margin-left: 7px; }
.right-half { width: 1586px; margin-left: 14px; margin-right: auto; }
.incr { height: 48px; padding-left: 10px; display: flex; }
.incr span { width: 154px; }
.incr.r span { width: 190px; }
.card h4 { height: 31px; background: #ececec; padding-left: 7px; font-size: 12px; display: flex; align-items: center; }
.drc, .tim { height: 188px; }
.ln { display: flex; height: 25px; align-items: center; padding-left: 10px; }
h4 + .ln { margin-top: 6px; }
.l2 { height: 24px; }
.l3 { height: 22px; padding-left: 9px; }
.k { width: 67px; }
.dot { width: 14px; height: 14px; border-radius: 7px; background: #e8c417; color: #fff; font: 700 11px/14px "Noto Sans", sans-serif; text-align: center; margin-right: 6px; }
.info { background: #34548a; font: italic 700 11px/14px "Liberation Serif", serif; }
.sw { margin-left: auto; margin-top: -4px; display: flex; align-items: center; font-weight: 400; color: #777; letter-spacing: -0.07px; margin-right: 22px; }
.sw > * + *, .gt > * + * { background: linear-gradient(#777, #777) left 0 center / 1px 12px no-repeat; }
.sw b { padding-left: 10px; letter-spacing: 0.05px; }
.sw > span:first-child { padding-right: 19px; }
.sw.t { margin-right: 35px; }
.sw.t b, .sw.p b { padding-right: 11px; padding-left: 0; }
.sw.t span { padding-left: 10px; padding-right: 12px; }
.sw.t span:last-child { padding-right: 0; padding-left: 11px; }
.sw.p { margin-right: 27px; }
.sw.p span { padding-left: 10px; }
.gt { height: 30px; margin-top: 0; padding: 8px 30px 0 0; display: flex; justify-content: flex-end; align-items: center; color: #777; }
.gt b { padding-right: 11px; }
.gt span { padding-left: 11px; }
.chart { font-size: 12px; }
.chart text { fill: #111; }
.chart .cat text { text-anchor: end; }
.chart .num text, .chart .val text { text-anchor: middle; }
.chart .val text { fill: #777; font-size: 10px; font-weight: 600; }
.card dl { display: grid; grid-template-columns: 191px 1fr; grid-auto-rows: 25px; align-items: center; padding: 6px 0 0 10px; }
.card.pow dl { grid-template-columns: 202px 1fr; }
.card.tim > a, .card .rep { display: flex; height: 25px; align-items: center; padding-left: 10px; }
.card .rep { height: 23px; padding-left: 9px; }

.split { height: 80px; display: flex; }
.split-l { width: 560px; display: flex; flex-direction: column; }
.pl, .pr { flex: 1; min-height: 0; display: flex; overflow: hidden; }
.list { flex: 1; padding-left: 22px; overflow: hidden; }
.list p { height: 23px; line-height: 21px; }
mark { display: block; width: 186px; height: 23px; background: #cbdcfd; color: #222; line-height: 23px; letter-spacing: 0; }
.grip { width: 8px; border-right: 1px solid #ddd; padding-top: 10px; background: linear-gradient(#e4e4e4, #e4e4e4) 0 32px / 8px 2px no-repeat; }
.grip svg { margin-left: 0; }
.split-r { flex: 1; display: flex; flex-direction: column; min-width: 0; }
.sum { padding-left: 5px; }
.pr p { padding: 12px 0 0 16px; width: 323px; }
fieldset { margin: 9px 0 0; width: 352px; height: 90px; border: 1px solid #bbb; padding: 0; position: relative; }
legend { margin-left: 3px; padding: 0 2px; line-height: 17px; }
.nub { position: absolute; left: 81px; top: 19px; width: 14px; height: 1px; background: #aaa; }
.pr .vbar { margin-left: auto; }
.pl .vbar, .pr .vbar { height: 46px; }
.runs { flex: 1; background: #f7f7f7; position: relative; padding: 4px 3px; }
.runs b { display: block; width: 125px; padding-left: 6px; }
.foot { height: 21px; flex: none; background: #eee; }
```
